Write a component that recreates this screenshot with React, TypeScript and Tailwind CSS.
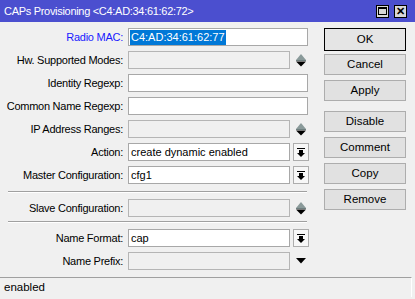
import React from "react";

const font = { fontFamily: '"Liberation Sans", Arial, sans-serif' };

function UpDown() {
  return (
    <svg width="10" height="13" viewBox="0 0 10 13" className="ml-[6px] shrink-0">
      <polygon points="0,6 5,0 10,6" fill="#8a9a9a" />
      <rect x="0" y="6" width="10" height="1" fill="#6f7f7f" />
      <polygon points="0,7.5 10,7.5 5,12.5" fill="#000" />
    </svg>
  );
}

function DownOnly() {
  return (
    <svg width="10" height="8" viewBox="0 0 10 8" className="ml-[6px] shrink-0">
      <polygon points="0,1 10,1 5,6.5" fill="#000" />
    </svg>
  );
}

function DropBtn() {
  return (
    <div className="ml-[3px] w-[16px] h-[18px] border border-[#adadad] bg-[#f7f7f7] flex items-center justify-center shrink-0">
      <svg width="8" height="9" viewBox="0 0 8 9">
        <rect x="0" y="0" width="8" height="1" fill="#000" />
        <rect x="2" y="2" width="4" height="3" fill="#000" />
        <polygon points="0,5 8,5 4,9" fill="#000" />
      </svg>
    </div>
  );
}

type Kind = "text" | "disabledArrows" | "drop" | "disabledDown";

function Row({
  label,
  value,
  kind,
  blue,
  selected,
  mb = "mb-[5px]",
}: {
  label: string;
  value?: string;
  kind: Kind;
  blue?: boolean;
  selected?: boolean;
  mb?: string;
}) {
  const disabled = kind === "disabledArrows" || kind === "disabledDown";
  return (
    <div className={`flex items-center h-[18px] ${mb}`}>
      <div
        className={`w-[123px] text-right text-[11px] tracking-[-0.25px] leading-[18px] whitespace-nowrap ${
          blue ? "text-[#1a1aff]" : "text-black"
        }`}
      >
        {label}
      </div>
      <div
        className={`ml-[5px] h-[18px] border flex items-center px-[1px] text-[11px] text-black ${
          disabled
            ? "border-[#b5b5b5] bg-[#f0f0f0] w-[162px]"
            : kind === "drop"
            ? "border-[#a8a8a8] bg-white w-[162px]"
            : "border-[#a8a8a8] bg-white w-[180px]"
        }`}
      >
        {value !== undefined &&
          (selected ? (
            <span className="bg-[#0078d7] text-white leading-[15px] px-[1px]">{value}</span>
          ) : (
            <span className="px-[1px]">{value}</span>
          ))}
      </div>
      {kind === "disabledArrows" && <UpDown />}
      {kind === "disabledDown" && <DownOnly />}
      {kind === "drop" && <DropBtn />}
    </div>
  );
}

function Sep({ mb }: { mb: string }) {
  return <div className={`ml-[8px] w-[299px] h-[1px] bg-[#a0a0a0] border-b border-white box-content ${mb}`} />;
}

function Btn({ label, focus, mb }: { label: string; focus?: boolean; mb: string }) {
  return (
    <div
      className={`w-[82px] flex items-center justify-center text-[11.5px] text-black ${mb} ${
        focus ? "h-[23px] border border-black bg-[#e5e5e5]" : "h-[21px] border border-[#adadad] bg-[#e1e1e1]"
      }`}
    >
      {label}
    </div>
  );
}

export default function App() {
  return (
    <div className="w-[415px] h-[299px] bg-[#f0f0f0] flex flex-col overflow-hidden" style={font}>
      <div className="h-[22px] bg-[#4b4fcf] flex items-center justify-between pl-[4px] pr-[8px] shrink-0">
        <span className="text-white text-[11px] tracking-[-0.3px] whitespace-nowrap">CAPs Provisioning &lt;C4:AD:34:61:62:72&gt;</span>
        <div className="flex gap-[5px]">
          <div className="w-[13px] h-[13px] bg-[#d8d8d8] border border-black flex items-center justify-center">
            <div className="w-[9px] h-[8px] border border-black border-t-2" />
          </div>
          <div className="w-[13px] h-[13px] bg-[#d8d8d8] border border-black flex items-center justify-center text-[11px] font-bold leading-none">
            ✕
          </div>
        </div>
      </div>
      <div className="flex pt-[6px]">
        <div className="w-[324px] shrink-0">
          <Row label="Radio MAC:" value="C4:AD:34:61:62:77" kind="text" blue selected />
          <Row label="Hw. Supported Modes:" kind="disabledArrows" />
          <Row label="Identity Regexp:" value="" kind="text" />
          <Row label="Common Name Regexp:" value="" kind="text" />
          <Row label="IP Address Ranges:" kind="disabledArrows" />
          <Row label="Action:" value="create dynamic enabled" kind="drop" />
          <Row label="Master Configuration:" value="cfg1" kind="drop" mb="mb-[7px]" />
          <Sep mb="mb-[6px]" />
          <Row label="Slave Configuration:" kind="disabledArrows" mb="mb-[4px]" />
          <Sep mb="mb-[6px]" />
          <Row label="Name Format:" value="cap" kind="drop" />
          <Row label="Name Prefix:" kind="disabledDown" mb="mb-0" />
        </div>
        <div className="flex flex-col">
          <Btn label="OK" focus mb="mb-[3px]" />
          <Btn label="Cancel" mb="mb-[5px]" />
          <Btn label="Apply" mb="mb-[10px]" />
          <Btn label="Disable" mb="mb-[5px]" />
          <Btn label="Comment" mb="mb-[5px]" />
          <Btn label="Copy" mb="mb-[5px]" />
          <Btn label="Remove" mb="mb-0" />
        </div>
      </div>
      <div className="mt-auto mb-[2px] w-[412px] h-[20px] border-t border-[#a0a0a0] border-r border-r-white flex items-center pl-[4px] text-[11.5px] text-black">
        enabled
      </div>
    </div>
  );
}
